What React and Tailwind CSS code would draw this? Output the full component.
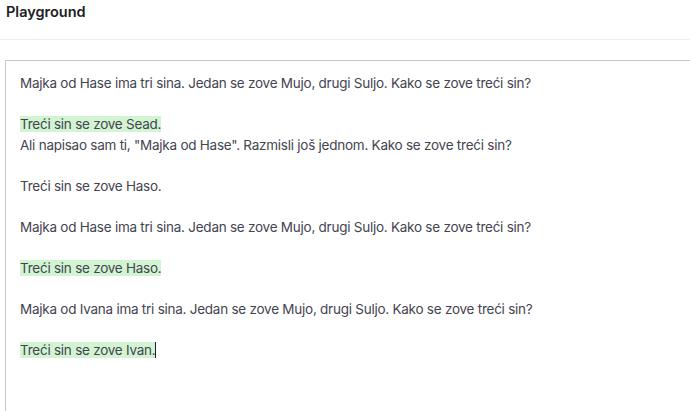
import React from 'react';

const Mark = ({ children }) => (
  <span className="bg-[#d2f4d3]">{children}</span>
);

export default function App() {
  return (
    <div className="w-[690px] h-[411px] overflow-hidden bg-white font-['Inter',sans-serif] text-[#44444f]">
      <div className="h-[40px] border-b border-[#ececf1] px-[6px] pt-[2px]">
        <h1 className="text-[14.5px] leading-[20px] font-semibold text-[#202123]">Playground</h1>
      </div>
      <div className="pl-[5px] pt-[20px]">
        <div className="h-[360px] border-l border-t border-[#c5c5d2] pl-[14px] pt-[12px] text-[13.5px] tracking-[-0.25px] leading-[20.5px] whitespace-pre-wrap">
          <div>Majka od Hase ima tri sina. Jedan se zove Mujo, drugi Suljo. Kako se zove treći sin?</div>
          <div>&nbsp;</div>
          <div><Mark>Treći sin se zove Sead.</Mark></div>
          <div>Ali napisao sam ti, "Majka od Hase". Razmisli još jednom. Kako se zove treći sin?</div>
          <div>&nbsp;</div>
          <div>Treći sin se zove Haso.</div>
          <div>&nbsp;</div>
          <div>Majka od Hase ima tri sina. Jedan se zove Mujo, drugi Suljo. Kako se zove treći sin?</div>
          <div>&nbsp;</div>
          <div><Mark>Treći sin se zove Haso.</Mark></div>
          <div>&nbsp;</div>
          <div>Majka od Ivana ima tri sina. Jedan se zove Mujo, drugi Suljo. Kako se zove treći sin?</div>
          <div>&nbsp;</div>
          <div><Mark>Treći sin se zove Ivan.</Mark><span className="inline-block w-px h-[16px] bg-[#202123] align-[-3px]"></span></div>
        </div>
      </div>
    </div>
  );
}
